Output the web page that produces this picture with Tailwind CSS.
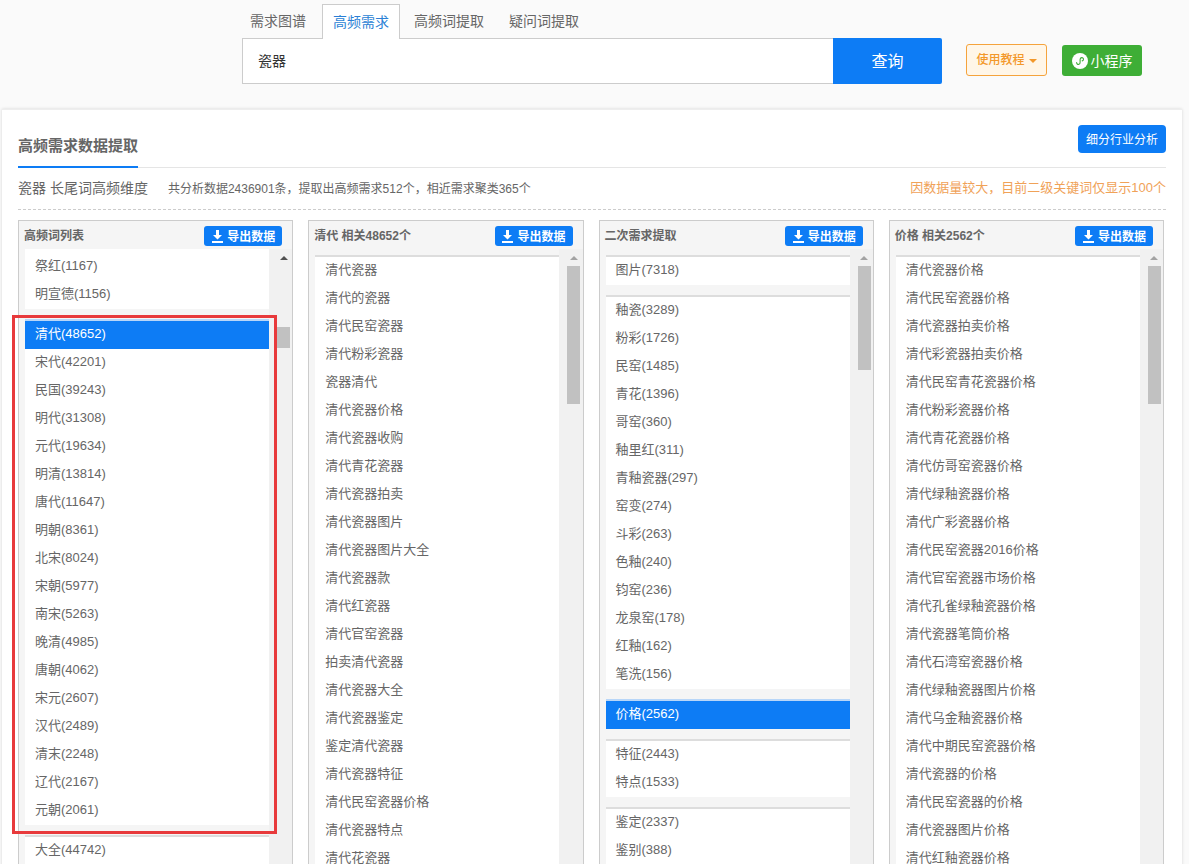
<!DOCTYPE html>
<html lang="zh">
<head>
<meta charset="utf-8">
<title>高频需求</title>
<script src="https://cdn.jsdelivr.net/npm/@tailwindcss/browser@4"></script>
</head>
<body class="bg-[#fafafa]">
<div class="relative h-screen overflow-hidden bg-[#fafafa] font-['Liberation_Sans','Noto_Sans_CJK_SC',sans-serif] text-[#666]">

  <header class="flex h-[109px] pl-[242px]">
    <div class="w-[700px] pt-[4px]">
      <nav class="relative z-10 -mb-px flex h-[35px] text-sm leading-[34px]">
        <a class="ml-2 w-[72px]">需求图谱</a>
        <a class="w-[78px] border border-b-0 border-[#ccc] bg-white text-center text-[#2a7fd5]">高频需求</a>
        <a class="ml-[14px] w-[95px]">高频词提取</a>
        <a>疑问词提取</a>
      </nav>
      <div class="flex h-[46px]">
        <div class="flex-1 border border-r-0 border-[#ccc] bg-white pl-[15px] text-sm leading-[44px] text-[#333]">瓷器</div>
        <button class="w-[109px] rounded-r-[2px] bg-[#0d7cf5] pt-px text-base text-white">查询</button>
      </div>
    </div>
    <div class="ml-6 flex items-start pt-[44px]">
      <button class="flex h-8 w-[81px] items-center justify-center gap-1 rounded-[3px] border border-[#f5a33c] bg-[#fff6e8] text-xs font-medium text-[#f3982a]">使用教程<span class="mt-[2px] border-x-4 border-t-4 border-x-transparent border-t-[#f3982a]"></span></button>
      <button class="ml-[15px] mt-px flex h-[31px] w-20 items-center justify-center gap-[3px] rounded-[3px] bg-[#3eae36] text-sm text-white">
        <svg class="h-4 w-4" viewBox="0 0 16 16"><circle cx="8" cy="8" r="8" fill="#fff"/><path d="M4.600 9.600c0 1.200 1 2 2 1.800 1-.2 1.600-1 1.500-2V6.600c0-1 .7-1.800 1.600-2 1-.1 1.900.7 1.800 1.800-.1.800-.6 1.300-1.300 1.500" fill="none" stroke="#3eae36" stroke-width="1.100" stroke-linecap="round"/></svg>
        小程序
      </button>
    </div>
  </header>

  <main class="ml-[2px] h-[760px] w-[1180px] border-t border-[#eee] bg-white px-4 pt-[15px] shadow-[0_0_3px_rgba(0,0,0,0.15)]">
    <div class="flex h-[43px] justify-between border-b border-[#e5e5e5]">
      <h2 class="h-[43px] w-[120px] border-b-2 border-[#0d7cf5] pt-[11px] text-[15px] leading-[20px] font-semibold text-[#666]">高频需求数据提取</h2>
      <button class="h-7 w-[88px] rounded-[4px] bg-[#0d7cf5] pt-px text-xs text-white">细分行业分析</button>
    </div>
    <div class="flex h-[42px] items-center justify-between border-b border-dashed border-[#ccc] pb-[2px]">
      <p class="text-xs"><span class="mr-5 text-sm">瓷器 长尾词高频维度</span>共分析数据2436901条，提取出高频需求512个，相近需求聚类365个</p>
      <p class="text-[13px] text-[#f0a258]">因数据量较大，目前二级关键词仅显示100个</p>
    </div>

    <div class="mt-[10px] grid w-[1146px] grid-cols-4 gap-[15px]">

      <section class="h-[700px] border border-[#ccc] bg-[#f5f5f5]">
        <div class="flex h-[28px] items-start justify-between pl-[5px] pr-[10px] pt-[5px]">
          <h3 class="pt-px text-xs leading-[18px] font-semibold">高频词列表</h3>
          <button class="flex h-5 w-[78px] items-center justify-center gap-[3px] rounded-[3px] bg-[#0d7cf5] pt-px text-xs font-semibold text-white"><svg class="h-[13px] w-[13px]" viewBox="0 0 13 13" fill="#fff"><path d="M5 0h3v5h3L6.500 9.500 2 5h3zM1 11h11v2H1z"/></svg>导出数据</button>
        </div>
        <div class="flex h-[671px]">
          <div class="ml-[6px] w-[244px] shrink-0 overflow-hidden text-[13px] leading-[26px] [&_div:not(:has(div))]:pb-[2px]">
            <div class="mb-[10px] bg-white pl-[10px] pt-[4px]">
              <div>祭红(1167)</div><div>明宣德(1156)</div>
            </div>
            <div class="mb-[10px] border-t-2 border-[#b8d6f8] bg-white">
              <div class="bg-[#0d7cf5] pl-[10px] text-white">清代(48652)</div>
              <div class="pl-[10px]">
                <div>宋代(42201)</div><div>民国(39243)</div><div>明代(31308)</div><div>元代(19634)</div><div>明清(13814)</div><div>唐代(11647)</div><div>明朝(8361)</div><div>北宋(8024)</div><div>宋朝(5977)</div><div>南宋(5263)</div><div>晚清(4985)</div><div>唐朝(4062)</div><div>宋元(2607)</div><div>汉代(2489)</div><div>清末(2248)</div><div>辽代(2167)</div><div>元朝(2061)</div>
              </div>
            </div>
            <div class="border-t-2 border-[#ddd] bg-white pl-[10px]">
              <div>大全(44742)</div>
            </div>
          </div>
          <div class="flex-1 bg-[#f1f1f1] pl-[8px] pt-[7px]">
            <div class="flex w-[13px] flex-col items-center">
              <span class="border-x-4 border-b-4 border-x-transparent border-b-[#505050]"></span>
              <span class="mt-[67px] h-[21px] w-[13px] bg-[#c1c1c1]"></span>
            </div>
          </div>
        </div>
      </section>

      <section class="h-[700px] border border-[#ccc] bg-[#f5f5f5]">
        <div class="flex h-[28px] items-start justify-between pl-[5px] pr-[10px] pt-[5px]">
          <h3 class="pt-px text-xs leading-[18px] font-semibold">清代 相关48652个</h3>
          <button class="flex h-5 w-[78px] items-center justify-center gap-[3px] rounded-[3px] bg-[#0d7cf5] pt-px text-xs font-semibold text-white"><svg class="h-[13px] w-[13px]" viewBox="0 0 13 13" fill="#fff"><path d="M5 0h3v5h3L6.500 9.500 2 5h3zM1 11h11v2H1z"/></svg>导出数据</button>
        </div>
        <div class="flex h-[671px]">
          <div class="ml-[6px] w-[244px] shrink-0 overflow-hidden pt-[6px] text-[13px] leading-[26px] [&_div:not(:has(div))]:pb-[2px]">
            <div class="border-t-2 border-[#ddd] bg-white pl-[10px]">
              <div>清代瓷器</div><div>清代的瓷器</div><div>清代民窑瓷器</div><div>清代粉彩瓷器</div><div>瓷器清代</div><div>清代瓷器价格</div><div>清代瓷器收购</div><div>清代青花瓷器</div><div>清代瓷器拍卖</div><div>清代瓷器图片</div><div>清代瓷器图片大全</div><div>清代瓷器款</div><div>清代红瓷器</div><div>清代官窑瓷器</div><div>拍卖清代瓷器</div><div>清代瓷器大全</div><div>清代瓷器鉴定</div><div>鉴定清代瓷器</div><div>清代瓷器特征</div><div>清代民窑瓷器价格</div><div>清代瓷器特点</div><div>清代花瓷器</div>
            </div>
          </div>
          <div class="flex-1 bg-[#f1f1f1] pl-[8px] pt-[7px]">
            <div class="flex w-[13px] flex-col items-center">
              <span class="border-x-4 border-b-4 border-x-transparent border-b-[#a3a3a3]"></span>
              <span class="mt-[6px] h-[138px] w-[13px] bg-[#c1c1c1]"></span>
            </div>
          </div>
        </div>
      </section>

      <section class="h-[700px] border border-[#ccc] bg-[#f5f5f5]">
        <div class="flex h-[28px] items-start justify-between pl-[5px] pr-[10px] pt-[5px]">
          <h3 class="pt-px text-xs leading-[18px] font-semibold">二次需求提取</h3>
          <button class="flex h-5 w-[78px] items-center justify-center gap-[3px] rounded-[3px] bg-[#0d7cf5] pt-px text-xs font-semibold text-white"><svg class="h-[13px] w-[13px]" viewBox="0 0 13 13" fill="#fff"><path d="M5 0h3v5h3L6.500 9.500 2 5h3zM1 11h11v2H1z"/></svg>导出数据</button>
        </div>
        <div class="flex h-[671px]">
          <div class="ml-[6px] w-[244px] shrink-0 overflow-hidden pt-[6px] text-[13px] leading-[26px] [&_div:not(:has(div))]:pb-[2px]">
            <div class="mb-[10px] border-t-2 border-[#ddd] bg-white pl-[10px]">
              <div>图片(7318)</div>
            </div>
            <div class="mb-[10px] border-t-2 border-[#ddd] bg-white pl-[10px]">
              <div>釉瓷(3289)</div><div>粉彩(1726)</div><div>民窑(1485)</div><div>青花(1396)</div><div>哥窑(360)</div><div>釉里红(311)</div><div>青釉瓷器(297)</div><div>窑变(274)</div><div>斗彩(263)</div><div>色釉(240)</div><div>钧窑(236)</div><div>龙泉窑(178)</div><div>红釉(162)</div><div>笔洗(156)</div>
            </div>
            <div class="mb-[10px] border-t-2 border-[#b8d6f8] bg-[#0d7cf5] pl-[10px] text-white">
              <div>价格(2562)</div>
            </div>
            <div class="mb-[10px] border-t-2 border-[#ddd] bg-white pl-[10px]">
              <div>特征(2443)</div><div>特点(1533)</div>
            </div>
            <div class="border-t-2 border-[#ddd] bg-white pl-[10px]">
              <div>鉴定(2337)</div><div>鉴别(388)</div>
            </div>
          </div>
          <div class="flex-1 bg-[#f1f1f1] pl-[8px] pt-[7px]">
            <div class="flex w-[13px] flex-col items-center">
              <span class="border-x-4 border-b-4 border-x-transparent border-b-[#a3a3a3]"></span>
              <span class="mt-[6px] h-[104px] w-[13px] bg-[#c1c1c1]"></span>
            </div>
          </div>
        </div>
      </section>

      <section class="h-[700px] border border-[#ccc] bg-[#f5f5f5]">
        <div class="flex h-[28px] items-start justify-between pl-[5px] pr-[10px] pt-[5px]">
          <h3 class="pt-px text-xs leading-[18px] font-semibold">价格 相关2562个</h3>
          <button class="flex h-5 w-[78px] items-center justify-center gap-[3px] rounded-[3px] bg-[#0d7cf5] pt-px text-xs font-semibold text-white"><svg class="h-[13px] w-[13px]" viewBox="0 0 13 13" fill="#fff"><path d="M5 0h3v5h3L6.500 9.500 2 5h3zM1 11h11v2H1z"/></svg>导出数据</button>
        </div>
        <div class="flex h-[671px]">
          <div class="ml-[6px] w-[244px] shrink-0 overflow-hidden pt-[6px] text-[13px] leading-[26px] [&_div:not(:has(div))]:pb-[2px]">
            <div class="border-t-2 border-[#ddd] bg-white pl-[10px]">
              <div>清代瓷器价格</div><div>清代民窑瓷器价格</div><div>清代瓷器拍卖价格</div><div>清代彩瓷器拍卖价格</div><div>清代民窑青花瓷器价格</div><div>清代粉彩瓷器价格</div><div>清代青花瓷器价格</div><div>清代仿哥窑瓷器价格</div><div>清代绿釉瓷器价格</div><div>清代广彩瓷器价格</div><div>清代民窑瓷器2016价格</div><div>清代官窑瓷器市场价格</div><div>清代孔雀绿釉瓷器价格</div><div>清代瓷器笔筒价格</div><div>清代石湾窑瓷器价格</div><div>清代绿釉瓷器图片价格</div><div>清代乌金釉瓷器价格</div><div>清代中期民窑瓷器价格</div><div>清代瓷器的价格</div><div>清代民窑瓷器的价格</div><div>清代瓷器图片价格</div><div>清代红釉瓷器价格</div>
            </div>
          </div>
          <div class="flex-1 bg-[#f1f1f1] pl-[8px] pt-[7px]">
            <div class="flex w-[13px] flex-col items-center">
              <span class="border-x-4 border-b-4 border-x-transparent border-b-[#a3a3a3]"></span>
              <span class="mt-[6px] h-[138px] w-[13px] bg-[#c1c1c1]"></span>
            </div>
          </div>
        </div>
      </section>

    </div>
  </main>

  <div class="absolute left-[12px] top-[315px] h-[519px] w-[265px] border-[3px] border-[#e83a3c]"></div>
</div>
</body>
</html>
